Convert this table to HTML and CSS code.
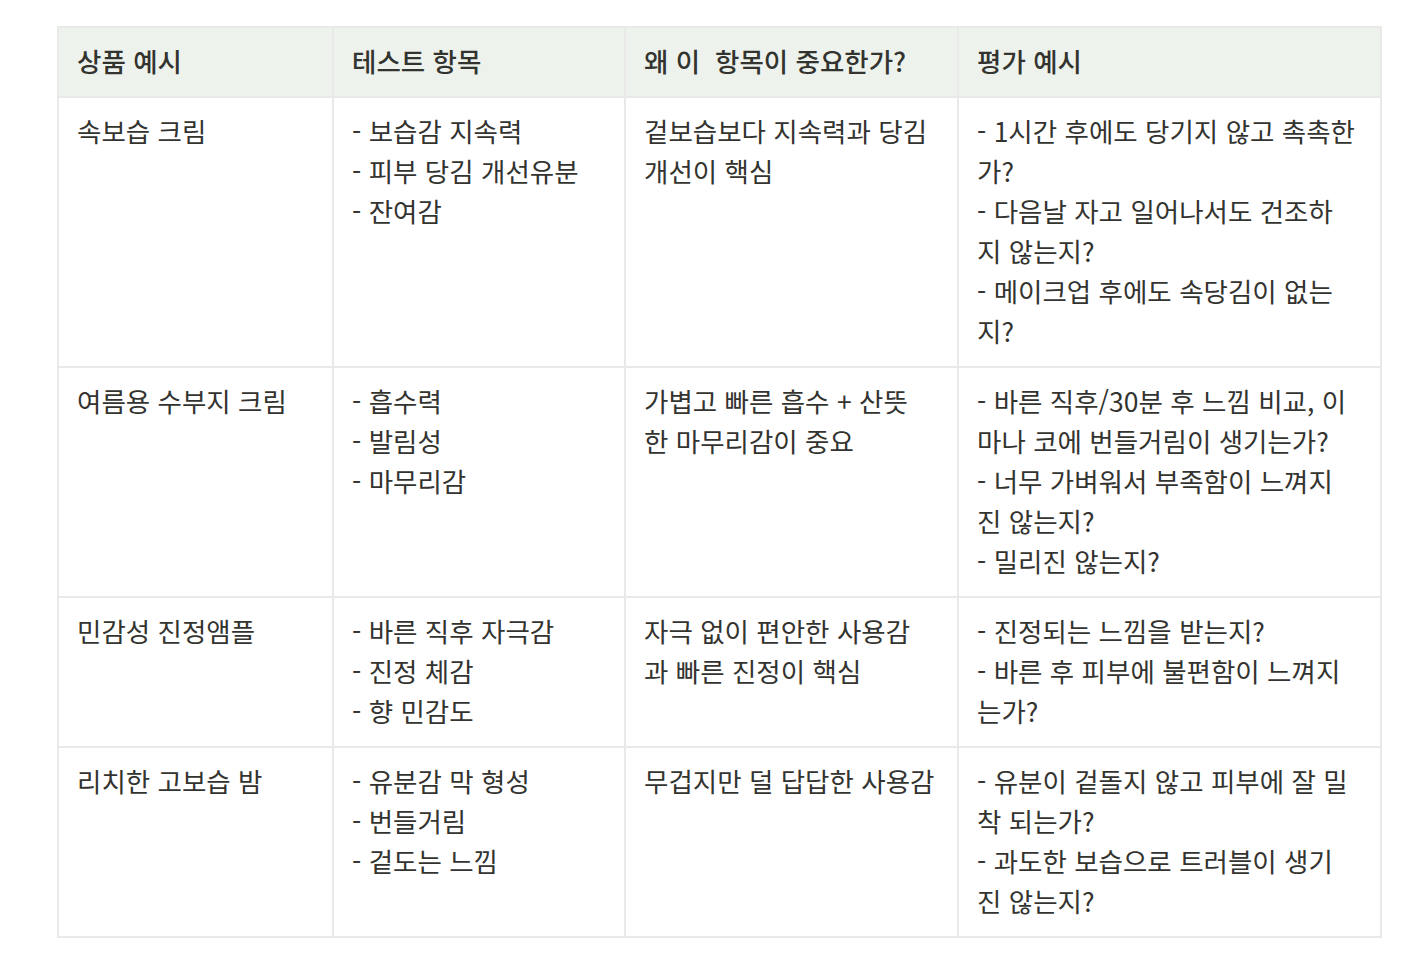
FILE: index.html
```html
<!DOCTYPE html>
<html lang="ko">
<head>
<meta charset="utf-8">
<title>테스트 항목 표</title>
<link rel="stylesheet" href="styles.css">
</head>
<body>
<div class="page">
  <table class="grid">
    <colgroup>
      <col class="c1">
      <col class="c2">
      <col class="c3">
      <col class="c4">
    </colgroup>
    <thead>
      <tr>
        <th>상품 예시</th>
        <th>테스트 항목</th>
        <th>왜 이&nbsp; 항목이 중요한가?</th>
        <th>평가 예시</th>
      </tr>
    </thead>
    <tbody>
      <tr>
        <td>속보습 크림</td>
        <td>- 보습감 지속력<br>- 피부 당김 개선유분<br>- 잔여감</td>
        <td>겉보습보다 지속력과 당김<br>개선이 핵심</td>
        <td>- 1시간 후에도 당기지 않고 촉촉한<br>가?<br>- 다음날 자고 일어나서도 건조하<br>지 않는지?<br>- 메이크업 후에도 속당김이 없는<br>지?</td>
      </tr>
      <tr>
        <td>여름용 수부지 크림</td>
        <td>- 흡수력<br>- 발림성<br>- 마무리감</td>
        <td>가볍고 빠른 흡수 + 산뜻<br>한 마무리감이 중요</td>
        <td>- 바른 직후/30분 후 느낌 비교, 이<br>마나 코에 번들거림이 생기는가?<br>- 너무 가벼워서 부족함이 느껴지<br>진 않는지?<br>- 밀리진 않는지?</td>
      </tr>
      <tr>
        <td>민감성 진정앰플</td>
        <td>- 바른 직후 자극감<br>- 진정 체감<br>- 향 민감도</td>
        <td>자극 없이 편안한 사용감<br>과 빠른 진정이 핵심</td>
        <td>- 진정되는 느낌을 받는지?<br>- 바른 후 피부에 불편함이 느껴지<br>는가?</td>
      </tr>
      <tr>
        <td>리치한 고보습 밤</td>
        <td>- 유분감 막 형성<br>- 번들거림<br>- 겉도는 느낌</td>
        <td>무겁지만 덜 답답한 사용감</td>
        <td>- 유분이 겉돌지 않고 피부에 잘 밀<br>착 되는가?<br>- 과도한 보습으로 트러블이 생기<br>진 않는지?</td>
      </tr>
    </tbody>
  </table>
</div>
</body>
</html>
```

FILE: styles.css
```css
html, body {
  margin: 0;
  padding: 0;
  background: #ffffff;
}

.page {
  padding: 26px 0 0 57px;
}

.grid {
  border-collapse: collapse;
  table-layout: fixed;
  width: 1323px;
  font-family: "Noto Sans CJK KR", "Noto Sans", sans-serif;
  font-size: 26.5px;
  line-height: 40px;
  color: #333330;
}

.c1 { width: 275px; }
.c2 { width: 292px; }
.c3 { width: 333px; }
.c4 { width: 423px; }

.grid th,
.grid td {
  border: 2px solid #e9e9e7;
  padding: 13px 10px 15px 18px;
  text-align: left;
  vertical-align: top;
  white-space: nowrap;
}

.grid th {
  background: #edf3ec;
  font-weight: 500;
}

.grid td {
  font-weight: 400;
}
```
